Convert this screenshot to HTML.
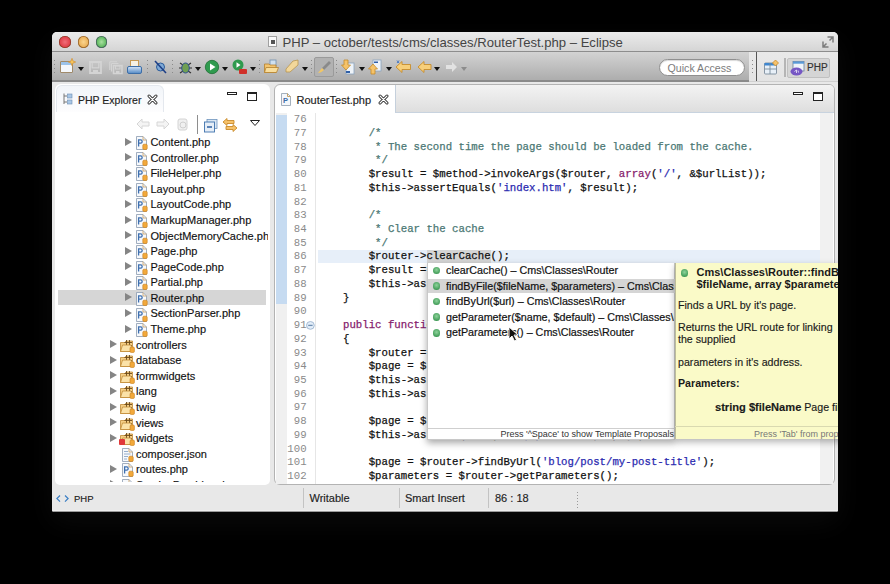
<!DOCTYPE html>
<html><head><meta charset="utf-8">
<style>
*{margin:0;padding:0;box-sizing:border-box}
html,body{width:890px;height:584px;overflow:hidden;background:#000}
body{position:relative;font-family:"Liberation Sans",sans-serif;}
.a{position:absolute}
svg{position:absolute;overflow:visible}
#shadow{position:absolute;left:52px;top:32px;width:786px;height:480px;border-radius:5px;box-shadow:0 10px 28px rgba(255,255,255,.045)}
#win{position:absolute;left:0;top:0;width:890px;height:584px;clip-path:inset(32px 52px 72px 52px round 5px 5px 2px 2px);background:#e8e8e8}
.t{position:absolute;white-space:pre;line-height:1}
.code{position:absolute;left:317.4px;top:112.3px;font-family:"Liberation Mono",monospace;font-size:10.7px;line-height:13.72px;white-space:pre;color:#111;-webkit-text-stroke:0.25px currentColor}
.ln{position:absolute;left:280px;width:27.5px;top:112.3px;font-family:"Liberation Mono",monospace;font-size:10.7px;line-height:13.72px;white-space:pre;color:#8a8a8a;text-align:right}
.k{color:#86206c}
.s{color:#2a2ab0}
.c{color:#4b7874}
.treeX{position:absolute;left:0;top:134.1px;font-size:11px;line-height:15.58px;color:#111;white-space:pre}
.tri{position:absolute;width:0;height:0;border-left:7.5px solid #858585;border-top:4.3px solid transparent;border-bottom:4.3px solid transparent}
.dd{position:absolute;width:0;height:0;border-top:4px solid #111;border-left:3px solid transparent;border-right:3px solid transparent}
.dots{position:absolute;width:1px;background:repeating-linear-gradient(#8a8a8a 0 1px,transparent 1px 4px)}
</style></head>
<body>
<div id="shadow"></div>
<div id="win">
  <!-- title bar -->
  <div class="a" style="left:52px;top:32px;width:786px;height:19px;background:linear-gradient(#ebebeb,#d5d5d5)"></div>
  <div class="a" style="left:52px;top:51px;width:786px;height:1px;background:#8d8d8d"></div>
  <div class="a" style="left:59.4px;top:36.4px;width:11.2px;height:11.2px;border-radius:50%;background:radial-gradient(ellipse at 50% 50%,#f0707a 0,#e0404a 60%,#9a3a2a 100%);box-shadow:inset 0 0 0 0.8px rgba(120,60,30,.75)"></div>
  <div class="a" style="left:77.8px;top:36.4px;width:11.2px;height:11.2px;border-radius:50%;background:radial-gradient(ellipse at 50% 50%,#fbd58e 0,#eab15a 60%,#a8702a 100%);box-shadow:inset 0 0 0 0.8px rgba(130,80,30,.75)"></div>
  <div class="a" style="left:96.1px;top:36.4px;width:11.2px;height:11.2px;border-radius:50%;background:radial-gradient(ellipse at 50% 50%,#a9e0a0 0,#5fb860 60%,#3a6a50 100%);box-shadow:inset 0 0 0 0.8px rgba(60,70,90,.7)"></div>
  <div class="a" style="left:268px;top:36px;width:9px;height:11px;background:#fafafa;border:1px solid #a0a0a0"><div class="a" style="left:1.5px;top:3px;width:4px;height:4px;background:#555"></div></div>
  <div class="t" style="left:282.5px;top:35.6px;font-size:13.1px;color:#444">PHP – october/tests/cms/classes/RouterTest.php – Eclipse</div>
  <svg style="left:822px;top:35.5px" width="12" height="12"><path d="M5.5 1 H11 V6.5 M11 1 L7.5 4.5" stroke="#7c7c7c" stroke-width="1.5" fill="none"/><path d="M1 5.5 V11 H6.5 M1 11 L4.5 7.5" stroke="#7c7c7c" stroke-width="1.5" fill="none"/></svg>

  <!-- toolbar -->
  <div class="a" style="left:52px;top:52px;width:697px;height:28px;background:linear-gradient(#d3d3d3,#adadad)"></div>
  <div class="a" style="left:52px;top:80px;width:697px;height:1.5px;background:#8a8a8a"></div>
  <div class="a" style="left:749px;top:52px;width:89px;height:30px;background:linear-gradient(#e9e9e9,#e3e3e3)"></div>
  <div class="a" style="left:749px;top:81px;width:89px;height:1px;background:#cfcfcf"></div>
  <div class="a" style="left:755.5px;top:52px;width:1.5px;height:29px;background:#555"></div>
  <div class="dots" style="left:54px;top:60px;height:14px"></div>
  <div class="dots" style="left:147px;top:60px;height:14px"></div>
  <div class="dots" style="left:172px;top:60px;height:14px"></div>
  <div class="dots" style="left:259px;top:60px;height:14px"></div>
  <div class="dots" style="left:311px;top:60px;height:14px"></div>
  <div class="dots" style="left:336px;top:60px;height:14px"></div>
  <div class="dots" style="left:751.5px;top:60px;height:16px"></div>
  <!-- new -->
  <div class="a" style="left:60px;top:61px;width:13px;height:12px;background:linear-gradient(#9cc3ea 0 3px,#f4f7fb 3px);border:1px solid #a08a6a;border-radius:1px"></div>
  <svg style="left:68px;top:57.5px" width="8" height="8"><path d="M4 0.3 L5 3 L7.7 4 L5 5 L4 7.7 L3 5 L0.3 4 L3 3 Z" fill="#f6c45a" stroke="#d08a2a" stroke-width="0.6"/></svg>
  <div class="dd" style="left:77.5px;top:66.5px"></div>
  <!-- save (disabled) -->
  <svg style="left:88.5px;top:60.5px" width="13" height="13"><path d="M1 1 H12 V12 H1 Z" fill="none" stroke="#d4d4d4" stroke-width="1.8"/><rect x="3.2" y="1.5" width="6.6" height="5.3" fill="none" stroke="#d4d4d4" stroke-width="1.2"/><rect x="4" y="9" width="5" height="3" fill="#d4d4d4"/></svg>
  <svg style="left:108.5px;top:60.5px" width="14" height="13"><path d="M0.8 0.8 H8 M0.8 0.8 V9 M2.5 2.5 H9.5 M2.5 2.5 V10.5" fill="none" stroke="#d4d4d4" stroke-width="1.1"/><path d="M4.5 4.5 H13 V12.5 H4.5 Z" fill="none" stroke="#d4d4d4" stroke-width="1.6"/><rect x="6.5" y="5" width="4.5" height="3" fill="none" stroke="#d4d4d4" stroke-width="1"/><rect x="7" y="10" width="3.5" height="2.3" fill="#d4d4d4"/></svg>
  <!-- print -->
  <div class="a" style="left:130px;top:60px;width:9px;height:8px;background:#f6f1e4;border:1px solid #c59a55"></div>
  <div class="a" style="left:127px;top:66px;width:15px;height:8px;background:linear-gradient(#cfe0f3,#5b8fc8);border:1px solid #3c6ea8;border-radius:2px"></div>
  <!-- skip breakpoints -->
  <svg style="left:154px;top:60px" width="13" height="14"><circle cx="6.5" cy="7" r="4" fill="#7faad6" stroke="#2b5b9a"/><path d="M1 1 L12 13" stroke="#1e3f86" stroke-width="1.6"/></svg>
  <!-- debug bug -->
  <svg style="left:178px;top:60px" width="15" height="15"><path d="M2 3 L5 5 M13 3 L10 5 M1 8 H4 M11 8 H14 M2 13 L5 11 M13 13 L10 11" stroke="#333" stroke-width="1.2"/><ellipse cx="7.5" cy="8" rx="3.8" ry="5" fill="#6f9f52" stroke="#2f4f8f"/></svg>
  <div class="dd" style="left:194.5px;top:66.5px"></div>
  <!-- run -->
  <svg style="left:205px;top:60px" width="14" height="14"><circle cx="7" cy="7" r="6.7" fill="#2f9a4e" stroke="#1f6f35" stroke-width="0.8"/><path d="M5 3.5 L10.5 7 L5 10.5 Z" fill="#fff"/></svg>
  <div class="dd" style="left:222px;top:66.5px"></div>
  <!-- ext tools -->
  <svg style="left:232px;top:59px" width="16" height="16"><circle cx="6" cy="6" r="5.5" fill="#2f9a4e"/><path d="M4.5 3.3 L8.5 6 L4.5 8.7 Z" fill="#fff"/><rect x="7" y="10" width="8" height="5" rx="1" fill="#d0302a"/></svg>
  <div class="dd" style="left:249.5px;top:66.5px"></div>
  <!-- open type -->
  <svg style="left:264px;top:59px" width="15" height="15"><rect x="6" y="1" width="6" height="6" fill="#cfe0f0" stroke="#6f8fb0" stroke-width="0.8"/><path d="M0.5 5 H5 L6 6 H12 V13.5 H0.5 Z" fill="#f3c46e" stroke="#b5812f" stroke-width="0.8"/><path d="M2 8.5 H14.5 L12.5 13.5 H0.5 Z" fill="#f8dd9c" stroke="#b5812f" stroke-width="0.8"/></svg>
  <!-- brush -->
  <svg style="left:284px;top:59px" width="16" height="16"><path d="M9 2 L14 1 L14 6 L6 13 L2 13 L2 10 Z" fill="#f2d79a" stroke="#b9954f" stroke-width="0.8"/></svg>
  <div class="dd" style="left:302px;top:66.5px"></div>
  <!-- pressed button -->
  <div class="a" style="left:314px;top:57px;width:20px;height:20px;background:#b2b2b2;border:1px solid #9a9a9a;border-radius:2px"></div>
  <svg style="left:316px;top:59px" width="16" height="16"><path d="M13 2 L6 9 L8 11 L15 4 Z" fill="#8a8a8a"/><path d="M2 14 L6 9 L8 11 C6 13 4 14 2 14 Z" fill="#f2c766"/></svg>
  <!-- next annotation -->
  <svg style="left:341px;top:59px" width="14" height="16"><rect x="5" y="4" width="8" height="11" fill="#eef3f8" stroke="#8aa4bf" stroke-width="0.8"/><path d="M3 1 H7 V6 H9.5 L5 11 L0.5 6 H3 Z" fill="#f5c36a" stroke="#c58a2a" stroke-width="0.8"/><rect x="5" y="12" width="4" height="2" fill="#2f5fa8"/></svg>
  <div class="dd" style="left:358.5px;top:66.5px"></div>
  <svg style="left:368px;top:59px" width="14" height="16"><rect x="5" y="1" width="8" height="11" fill="#eef3f8" stroke="#8aa4bf" stroke-width="0.8"/><path d="M3 15 H7 V10 H9.5 L5 5 L0.5 10 H3 Z" fill="#f5c36a" stroke="#c58a2a" stroke-width="0.8"/><rect x="6" y="2.5" width="4" height="1.5" fill="#2f5fa8"/></svg>
  <div class="dd" style="left:385.5px;top:66.5px"></div>
  <!-- last edit -->
  <svg style="left:395px;top:60px" width="17" height="14"><path d="M1 7 L7 1.5 V4.5 H15.5 V9.5 H7 V12.5 Z" fill="#f7cf7a" stroke="#c78d2c" stroke-width="0.9"/><path d="M2 0.5 L4 3 M4 0.5 L2 3" stroke="#3a6fc0" stroke-width="0.9"/></svg>
  <svg style="left:417px;top:60px" width="15" height="14"><path d="M1 7 L7 1.5 V4.5 H14 V9.5 H7 V12.5 Z" fill="#f7cf7a" stroke="#c78d2c" stroke-width="0.9"/></svg>
  <div class="dd" style="left:433.5px;top:66.5px"></div>
  <svg style="left:445px;top:61px" width="13" height="12"><path d="M12 6 L7 1 V4 H1 V8 H7 V11 Z" fill="#e2e2e2"/></svg>
  <div class="dd" style="left:461px;top:66.5px;border-top-color:#8c8c8c"></div>

  <!-- quick access -->
  <div class="a" style="left:659px;top:58.5px;width:86px;height:17px;border-radius:9px;background:#fff;border:1px solid #8f8f8f;box-shadow:inset 0 1px 1px rgba(0,0,0,.15)"></div>
  <div class="t" style="left:667.5px;top:62.5px;font-size:10.65px;color:#7c7c7c">Quick Access</div>
  <!-- perspective bar -->
  <svg style="left:764px;top:60px" width="16" height="16"><rect x="0.5" y="3" width="12" height="11" rx="1" fill="#e8f0f8" stroke="#7c8c9c" stroke-width="0.9"/><rect x="0.5" y="3" width="12" height="2.5" fill="#3d86d0"/><path d="M6 3 V14 M0.5 9 H12.5" stroke="#7c8c9c" stroke-width="0.9"/><path d="M11.5 0 L14.5 3 L11.5 6 L8.5 3 Z" fill="#f6c26a" stroke="#c98a2a" stroke-width="0.8"/></svg>
  <div class="a" style="left:784px;top:58px;width:1.5px;height:19px;background:#b5b5b5"></div>
  <div class="a" style="left:787px;top:57.5px;width:43px;height:20px;background:#d5d5d5;border:1px solid #c0c0c0;border-radius:2px"></div>
  <svg style="left:789.5px;top:61px" width="16" height="16"><rect x="3" y="0.5" width="11" height="9.5" fill="#eef4fa" stroke="#6a7f99" stroke-width="0.8"/><rect x="3" y="0.5" width="11" height="2.2" fill="#5a9ad8"/><ellipse cx="6.5" cy="10.5" rx="6" ry="4" fill="#7657c4"/><path d="M4.5 10.5 L6.5 9 M6.5 9 V12 M8 9.5 L8.5 11.5" stroke="#e6e0f6" stroke-width="0.9"/></svg>
  <div class="t" style="left:807px;top:62.8px;font-size:10px;color:#333;-webkit-text-stroke:0.2px #333">PHP</div>

  <!-- ===== LEFT PANEL ===== -->
  <div class="a" style="left:54.5px;top:84px;width:215.5px;height:400.5px;background:#fff;border-radius:6px 6px 5px 5px"></div>
  <div class="a" style="left:55.5px;top:84.5px;width:108px;height:27px;border-radius:6px 6px 0 0;background:linear-gradient(#f2f5f9,#fdfdfe);border:1px solid #e4e8ee;border-bottom:none"></div>
  <svg style="left:63px;top:93px" width="10" height="12"><path d="M1 0.5 V11 M1 3 H4 M1 9 H4" stroke="#777" stroke-width="1"/><rect x="4.5" y="1" width="4.5" height="4" fill="#a9c7e6" stroke="#6b8db3" stroke-width="0.6"/><rect x="4.5" y="7" width="4.5" height="4" fill="#a9c7e6" stroke="#6b8db3" stroke-width="0.6"/></svg>
  <div class="t" style="left:78px;top:94.5px;font-size:10.5px;color:#222;-webkit-text-stroke:0.15px #222">PHP Explorer</div>
  <svg style="left:148px;top:95px" width="9" height="9"><path d="M1 1 L8 8 M8 1 L1 8" stroke="#1e1e1e" stroke-width="3" stroke-linecap="round"/><path d="M1 1 L8 8 M8 1 L1 8" stroke="#fff" stroke-width="1.2" stroke-linecap="round"/></svg>
  <div class="a" style="left:227px;top:91.5px;width:10px;height:3.5px;border:1px solid #222;background:#fff"></div>
  <div class="a" style="left:247px;top:91.5px;width:10px;height:9px;border:1px solid #222;border-top-width:2.5px;background:#fff"></div>
  <!-- explorer toolbar -->
  <svg style="left:136px;top:118px" width="14" height="12"><path d="M1 6 L6 1 V4 H13 V8 H6 V11 Z" fill="#f4f4f4" stroke="#d6d6d6"/></svg>
  <svg style="left:156px;top:118px" width="14" height="12"><path d="M13 6 L8 1 V4 H1 V8 H8 V11 Z" fill="#f4f4f4" stroke="#d6d6d6"/></svg>
  <svg style="left:177px;top:118px" width="12" height="13"><rect x="1" y="1" width="9" height="11" rx="2" fill="#f0f0f0" stroke="#d4d4d4"/><circle cx="6" cy="7" r="3" fill="none" stroke="#cfcfcf"/></svg>
  <div class="a" style="left:196.5px;top:115px;width:1px;height:19px;background:#8e8e8e"></div>
  <svg style="left:203.5px;top:118.5px" width="14" height="14"><rect x="3" y="0.5" width="10" height="9" fill="#dbe7f3" stroke="#6e94bd" stroke-width="0.8"/><rect x="0.5" y="3" width="10" height="10" fill="#e6eef7" stroke="#3f72ad" stroke-width="0.9"/><path d="M3 8 H8" stroke="#2b5ea0" stroke-width="1.5"/></svg>
  <svg style="left:222px;top:117px" width="16" height="16"><path d="M1 5 L5 1.5 V3.5 H12 V6.5 H5 V8.5 Z" fill="#f6c26a" stroke="#c98a2a" stroke-width="0.9"/><path d="M15 11 L11 7.5 V9.5 H4 V12.5 H11 V14.5 Z" fill="#f6c26a" stroke="#c98a2a" stroke-width="0.9"/></svg>
  <svg style="left:250px;top:120px" width="10" height="6"><path d="M0.5 0.5 H9.5 L5 5.5 Z" fill="#fff" stroke="#222" stroke-width="1"/></svg>

  <!-- selected row -->
  <div class="a" style="left:57.8px;top:290.4px;width:208.7px;height:14.9px;background:#d6d6d6"></div>
  <div id="treewrap" class="a" style="left:54.5px;top:113px;width:213px;height:369px;overflow:hidden">
<div class="tri" style="left:70.2px;top:24.6px"></div>
<svg style="left:81.8px;top:23.1px" width="12" height="14"><path d="M0.5 0.5 H7 L10.5 4 V13.5 H0.5 Z" fill="#f7f9fc" stroke="#8c9bb0" stroke-width="0.8"/><path d="M7 0.5 V4 H10.5" fill="none" stroke="#c9a060" stroke-width="0.8"/><path d="M2.6 10.5 V3.8 H4.8 C6.6 3.8 6.6 7.2 4.8 7.2 H2.6" fill="none" stroke="#3f70b0" stroke-width="1.3"/><rect x="6.8" y="8.2" width="4.4" height="5.3" rx="1.2" fill="#f2a93b" stroke="#c7801f" stroke-width="0.6"/></svg>
<div class="t" style="left:95.9px;top:22.10px;font-size:11px;line-height:15.58px;color:#111;-webkit-text-stroke:0.15px #111">Content.php</div>
<div class="tri" style="left:70.2px;top:40.2px"></div>
<svg style="left:81.8px;top:38.7px" width="12" height="14"><path d="M0.5 0.5 H7 L10.5 4 V13.5 H0.5 Z" fill="#f7f9fc" stroke="#8c9bb0" stroke-width="0.8"/><path d="M7 0.5 V4 H10.5" fill="none" stroke="#c9a060" stroke-width="0.8"/><path d="M2.6 10.5 V3.8 H4.8 C6.6 3.8 6.6 7.2 4.8 7.2 H2.6" fill="none" stroke="#3f70b0" stroke-width="1.3"/><rect x="6.8" y="8.2" width="4.4" height="5.3" rx="1.2" fill="#f2a93b" stroke="#c7801f" stroke-width="0.6"/></svg>
<div class="t" style="left:95.9px;top:37.68px;font-size:11px;line-height:15.58px;color:#111;-webkit-text-stroke:0.15px #111">Controller.php</div>
<div class="tri" style="left:70.2px;top:55.8px"></div>
<svg style="left:81.8px;top:54.3px" width="12" height="14"><path d="M0.5 0.5 H7 L10.5 4 V13.5 H0.5 Z" fill="#f7f9fc" stroke="#8c9bb0" stroke-width="0.8"/><path d="M7 0.5 V4 H10.5" fill="none" stroke="#c9a060" stroke-width="0.8"/><path d="M2.6 10.5 V3.8 H4.8 C6.6 3.8 6.6 7.2 4.8 7.2 H2.6" fill="none" stroke="#3f70b0" stroke-width="1.3"/><rect x="6.8" y="8.2" width="4.4" height="5.3" rx="1.2" fill="#f2a93b" stroke="#c7801f" stroke-width="0.6"/></svg>
<div class="t" style="left:95.9px;top:53.26px;font-size:11px;line-height:15.58px;color:#111;-webkit-text-stroke:0.15px #111">FileHelper.php</div>
<div class="tri" style="left:70.2px;top:71.3px"></div>
<svg style="left:81.8px;top:69.8px" width="12" height="14"><path d="M0.5 0.5 H7 L10.5 4 V13.5 H0.5 Z" fill="#f7f9fc" stroke="#8c9bb0" stroke-width="0.8"/><path d="M7 0.5 V4 H10.5" fill="none" stroke="#c9a060" stroke-width="0.8"/><path d="M2.6 10.5 V3.8 H4.8 C6.6 3.8 6.6 7.2 4.8 7.2 H2.6" fill="none" stroke="#3f70b0" stroke-width="1.3"/><rect x="6.8" y="8.2" width="4.4" height="5.3" rx="1.2" fill="#f2a93b" stroke="#c7801f" stroke-width="0.6"/></svg>
<div class="t" style="left:95.9px;top:68.84px;font-size:11px;line-height:15.58px;color:#111;-webkit-text-stroke:0.15px #111">Layout.php</div>
<div class="tri" style="left:70.2px;top:86.9px"></div>
<svg style="left:81.8px;top:85.4px" width="12" height="14"><path d="M0.5 0.5 H7 L10.5 4 V13.5 H0.5 Z" fill="#f7f9fc" stroke="#8c9bb0" stroke-width="0.8"/><path d="M7 0.5 V4 H10.5" fill="none" stroke="#c9a060" stroke-width="0.8"/><path d="M2.6 10.5 V3.8 H4.8 C6.6 3.8 6.6 7.2 4.8 7.2 H2.6" fill="none" stroke="#3f70b0" stroke-width="1.3"/><rect x="6.8" y="8.2" width="4.4" height="5.3" rx="1.2" fill="#f2a93b" stroke="#c7801f" stroke-width="0.6"/></svg>
<div class="t" style="left:95.9px;top:84.42px;font-size:11px;line-height:15.58px;color:#111;-webkit-text-stroke:0.15px #111">LayoutCode.php</div>
<div class="tri" style="left:70.2px;top:102.5px"></div>
<svg style="left:81.8px;top:101.0px" width="12" height="14"><path d="M0.5 0.5 H7 L10.5 4 V13.5 H0.5 Z" fill="#f7f9fc" stroke="#8c9bb0" stroke-width="0.8"/><path d="M7 0.5 V4 H10.5" fill="none" stroke="#c9a060" stroke-width="0.8"/><path d="M2.6 10.5 V3.8 H4.8 C6.6 3.8 6.6 7.2 4.8 7.2 H2.6" fill="none" stroke="#3f70b0" stroke-width="1.3"/><rect x="6.8" y="8.2" width="4.4" height="5.3" rx="1.2" fill="#f2a93b" stroke="#c7801f" stroke-width="0.6"/></svg>
<div class="t" style="left:95.9px;top:100.00px;font-size:11px;line-height:15.58px;color:#111;-webkit-text-stroke:0.15px #111">MarkupManager.php</div>
<div class="tri" style="left:70.2px;top:118.1px"></div>
<svg style="left:81.8px;top:116.6px" width="12" height="14"><path d="M0.5 0.5 H7 L10.5 4 V13.5 H0.5 Z" fill="#f7f9fc" stroke="#8c9bb0" stroke-width="0.8"/><path d="M7 0.5 V4 H10.5" fill="none" stroke="#c9a060" stroke-width="0.8"/><path d="M2.6 10.5 V3.8 H4.8 C6.6 3.8 6.6 7.2 4.8 7.2 H2.6" fill="none" stroke="#3f70b0" stroke-width="1.3"/><rect x="6.8" y="8.2" width="4.4" height="5.3" rx="1.2" fill="#f2a93b" stroke="#c7801f" stroke-width="0.6"/></svg>
<div class="t" style="left:95.9px;top:115.58px;font-size:11px;line-height:15.58px;color:#111;-webkit-text-stroke:0.15px #111">ObjectMemoryCache.php</div>
<div class="tri" style="left:70.2px;top:133.7px"></div>
<svg style="left:81.8px;top:132.2px" width="12" height="14"><path d="M0.5 0.5 H7 L10.5 4 V13.5 H0.5 Z" fill="#f7f9fc" stroke="#8c9bb0" stroke-width="0.8"/><path d="M7 0.5 V4 H10.5" fill="none" stroke="#c9a060" stroke-width="0.8"/><path d="M2.6 10.5 V3.8 H4.8 C6.6 3.8 6.6 7.2 4.8 7.2 H2.6" fill="none" stroke="#3f70b0" stroke-width="1.3"/><rect x="6.8" y="8.2" width="4.4" height="5.3" rx="1.2" fill="#f2a93b" stroke="#c7801f" stroke-width="0.6"/></svg>
<div class="t" style="left:95.9px;top:131.16px;font-size:11px;line-height:15.58px;color:#111;-webkit-text-stroke:0.15px #111">Page.php</div>
<div class="tri" style="left:70.2px;top:149.2px"></div>
<svg style="left:81.8px;top:147.7px" width="12" height="14"><path d="M0.5 0.5 H7 L10.5 4 V13.5 H0.5 Z" fill="#f7f9fc" stroke="#8c9bb0" stroke-width="0.8"/><path d="M7 0.5 V4 H10.5" fill="none" stroke="#c9a060" stroke-width="0.8"/><path d="M2.6 10.5 V3.8 H4.8 C6.6 3.8 6.6 7.2 4.8 7.2 H2.6" fill="none" stroke="#3f70b0" stroke-width="1.3"/><rect x="6.8" y="8.2" width="4.4" height="5.3" rx="1.2" fill="#f2a93b" stroke="#c7801f" stroke-width="0.6"/></svg>
<div class="t" style="left:95.9px;top:146.74px;font-size:11px;line-height:15.58px;color:#111;-webkit-text-stroke:0.15px #111">PageCode.php</div>
<div class="tri" style="left:70.2px;top:164.8px"></div>
<svg style="left:81.8px;top:163.3px" width="12" height="14"><path d="M0.5 0.5 H7 L10.5 4 V13.5 H0.5 Z" fill="#f7f9fc" stroke="#8c9bb0" stroke-width="0.8"/><path d="M7 0.5 V4 H10.5" fill="none" stroke="#c9a060" stroke-width="0.8"/><path d="M2.6 10.5 V3.8 H4.8 C6.6 3.8 6.6 7.2 4.8 7.2 H2.6" fill="none" stroke="#3f70b0" stroke-width="1.3"/><rect x="6.8" y="8.2" width="4.4" height="5.3" rx="1.2" fill="#f2a93b" stroke="#c7801f" stroke-width="0.6"/></svg>
<div class="t" style="left:95.9px;top:162.32px;font-size:11px;line-height:15.58px;color:#111;-webkit-text-stroke:0.15px #111">Partial.php</div>
<div class="tri" style="left:70.2px;top:180.4px"></div>
<svg style="left:81.8px;top:178.9px" width="12" height="14"><path d="M0.5 0.5 H7 L10.5 4 V13.5 H0.5 Z" fill="#f7f9fc" stroke="#8c9bb0" stroke-width="0.8"/><path d="M7 0.5 V4 H10.5" fill="none" stroke="#c9a060" stroke-width="0.8"/><path d="M2.6 10.5 V3.8 H4.8 C6.6 3.8 6.6 7.2 4.8 7.2 H2.6" fill="none" stroke="#3f70b0" stroke-width="1.3"/><rect x="6.8" y="8.2" width="4.4" height="5.3" rx="1.2" fill="#f2a93b" stroke="#c7801f" stroke-width="0.6"/></svg>
<div class="t" style="left:95.9px;top:177.90px;font-size:11px;line-height:15.58px;color:#111;-webkit-text-stroke:0.15px #111">Router.php</div>
<div class="tri" style="left:70.2px;top:196.0px"></div>
<svg style="left:81.8px;top:194.5px" width="12" height="14"><path d="M0.5 0.5 H7 L10.5 4 V13.5 H0.5 Z" fill="#f7f9fc" stroke="#8c9bb0" stroke-width="0.8"/><path d="M7 0.5 V4 H10.5" fill="none" stroke="#c9a060" stroke-width="0.8"/><path d="M2.6 10.5 V3.8 H4.8 C6.6 3.8 6.6 7.2 4.8 7.2 H2.6" fill="none" stroke="#3f70b0" stroke-width="1.3"/><rect x="6.8" y="8.2" width="4.4" height="5.3" rx="1.2" fill="#f2a93b" stroke="#c7801f" stroke-width="0.6"/></svg>
<div class="t" style="left:95.9px;top:193.48px;font-size:11px;line-height:15.58px;color:#111;-webkit-text-stroke:0.15px #111">SectionParser.php</div>
<div class="tri" style="left:70.2px;top:211.6px"></div>
<svg style="left:81.8px;top:210.1px" width="12" height="14"><path d="M0.5 0.5 H7 L10.5 4 V13.5 H0.5 Z" fill="#f7f9fc" stroke="#8c9bb0" stroke-width="0.8"/><path d="M7 0.5 V4 H10.5" fill="none" stroke="#c9a060" stroke-width="0.8"/><path d="M2.6 10.5 V3.8 H4.8 C6.6 3.8 6.6 7.2 4.8 7.2 H2.6" fill="none" stroke="#3f70b0" stroke-width="1.3"/><rect x="6.8" y="8.2" width="4.4" height="5.3" rx="1.2" fill="#f2a93b" stroke="#c7801f" stroke-width="0.6"/></svg>
<div class="t" style="left:95.9px;top:209.06px;font-size:11px;line-height:15.58px;color:#111;-webkit-text-stroke:0.15px #111">Theme.php</div>
<div class="tri" style="left:55.5px;top:227.1px"></div>
<svg style="left:65.5px;top:225.6px" width="15" height="14"><path d="M0.5 3.5 H5 L6 2 H12.5 V12.5 H0.5 Z" fill="#f5cf86" stroke="#c08a36" stroke-width="0.8"/><path d="M6.5 1 V10 M9.5 1 V10 M4.5 3.5 H12 M4.5 6.5 H12" stroke="#6b4a1a" stroke-width="0.9"/><path d="M0.5 12.5 L2.5 6 H11 L12.5 12.5 Z" fill="#fbe2a8" stroke="#c08a36" stroke-width="0.8"/><rect x="10" y="8" width="4.4" height="5.5" rx="1.2" fill="#f2a93b" stroke="#c7801f" stroke-width="0.6"/></svg>
<div class="t" style="left:81.5px;top:224.64px;font-size:11px;line-height:15.58px;color:#111;-webkit-text-stroke:0.15px #111">controllers</div>
<div class="tri" style="left:55.5px;top:242.7px"></div>
<svg style="left:65.5px;top:241.2px" width="15" height="14"><path d="M0.5 3.5 H5 L6 2 H12.5 V12.5 H0.5 Z" fill="#f5cf86" stroke="#c08a36" stroke-width="0.8"/><path d="M6.5 1 V10 M9.5 1 V10 M4.5 3.5 H12 M4.5 6.5 H12" stroke="#6b4a1a" stroke-width="0.9"/><path d="M0.5 12.5 L2.5 6 H11 L12.5 12.5 Z" fill="#fbe2a8" stroke="#c08a36" stroke-width="0.8"/><rect x="10" y="8" width="4.4" height="5.5" rx="1.2" fill="#f2a93b" stroke="#c7801f" stroke-width="0.6"/></svg>
<div class="t" style="left:81.5px;top:240.22px;font-size:11px;line-height:15.58px;color:#111;-webkit-text-stroke:0.15px #111">database</div>
<div class="tri" style="left:55.5px;top:258.3px"></div>
<svg style="left:65.5px;top:256.8px" width="15" height="14"><path d="M0.5 3.5 H5 L6 2 H12.5 V12.5 H0.5 Z" fill="#f5cf86" stroke="#c08a36" stroke-width="0.8"/><path d="M6.5 1 V10 M9.5 1 V10 M4.5 3.5 H12 M4.5 6.5 H12" stroke="#6b4a1a" stroke-width="0.9"/><path d="M0.5 12.5 L2.5 6 H11 L12.5 12.5 Z" fill="#fbe2a8" stroke="#c08a36" stroke-width="0.8"/><rect x="10" y="8" width="4.4" height="5.5" rx="1.2" fill="#f2a93b" stroke="#c7801f" stroke-width="0.6"/></svg>
<div class="t" style="left:81.5px;top:255.80px;font-size:11px;line-height:15.58px;color:#111;-webkit-text-stroke:0.15px #111">formwidgets</div>
<div class="tri" style="left:55.5px;top:273.9px"></div>
<svg style="left:65.5px;top:272.4px" width="15" height="14"><path d="M0.5 3.5 H5 L6 2 H12.5 V12.5 H0.5 Z" fill="#f5cf86" stroke="#c08a36" stroke-width="0.8"/><path d="M6.5 1 V10 M9.5 1 V10 M4.5 3.5 H12 M4.5 6.5 H12" stroke="#6b4a1a" stroke-width="0.9"/><path d="M0.5 12.5 L2.5 6 H11 L12.5 12.5 Z" fill="#fbe2a8" stroke="#c08a36" stroke-width="0.8"/><rect x="10" y="8" width="4.4" height="5.5" rx="1.2" fill="#f2a93b" stroke="#c7801f" stroke-width="0.6"/></svg>
<div class="t" style="left:81.5px;top:271.38px;font-size:11px;line-height:15.58px;color:#111;-webkit-text-stroke:0.15px #111">lang</div>
<div class="tri" style="left:55.5px;top:289.5px"></div>
<svg style="left:65.5px;top:288.0px" width="15" height="14"><path d="M0.5 3.5 H5 L6 2 H12.5 V12.5 H0.5 Z" fill="#f5cf86" stroke="#c08a36" stroke-width="0.8"/><path d="M6.5 1 V10 M9.5 1 V10 M4.5 3.5 H12 M4.5 6.5 H12" stroke="#6b4a1a" stroke-width="0.9"/><path d="M0.5 12.5 L2.5 6 H11 L12.5 12.5 Z" fill="#fbe2a8" stroke="#c08a36" stroke-width="0.8"/><rect x="10" y="8" width="4.4" height="5.5" rx="1.2" fill="#f2a93b" stroke="#c7801f" stroke-width="0.6"/></svg>
<div class="t" style="left:81.5px;top:286.96px;font-size:11px;line-height:15.58px;color:#111;-webkit-text-stroke:0.15px #111">twig</div>
<div class="tri" style="left:55.5px;top:305.0px"></div>
<svg style="left:65.5px;top:303.5px" width="15" height="14"><path d="M0.5 3.5 H5 L6 2 H12.5 V12.5 H0.5 Z" fill="#f5cf86" stroke="#c08a36" stroke-width="0.8"/><path d="M6.5 1 V10 M9.5 1 V10 M4.5 3.5 H12 M4.5 6.5 H12" stroke="#6b4a1a" stroke-width="0.9"/><path d="M0.5 12.5 L2.5 6 H11 L12.5 12.5 Z" fill="#fbe2a8" stroke="#c08a36" stroke-width="0.8"/><rect x="10" y="8" width="4.4" height="5.5" rx="1.2" fill="#f2a93b" stroke="#c7801f" stroke-width="0.6"/></svg>
<div class="t" style="left:81.5px;top:302.54px;font-size:11px;line-height:15.58px;color:#111;-webkit-text-stroke:0.15px #111">views</div>
<div class="tri" style="left:55.5px;top:320.6px"></div>
<svg style="left:65.5px;top:319.1px" width="15" height="14"><path d="M0.5 3.5 H5 L6 2 H12.5 V12.5 H0.5 Z" fill="#f5cf86" stroke="#c08a36" stroke-width="0.8"/><path d="M6.5 1 V10 M9.5 1 V10 M4.5 3.5 H12 M4.5 6.5 H12" stroke="#6b4a1a" stroke-width="0.9"/><path d="M0.5 12.5 L2.5 6 H11 L12.5 12.5 Z" fill="#fbe2a8" stroke="#c08a36" stroke-width="0.8"/><rect x="10" y="8" width="4.4" height="5.5" rx="1.2" fill="#f2a93b" stroke="#c7801f" stroke-width="0.6"/></svg>
<div class="a" style="left:64.5px;top:326.1px;width:6px;height:6px;background:#e0393a;border-radius:1px"></div>
<div class="t" style="left:81.5px;top:318.12px;font-size:11px;line-height:15.58px;color:#111;-webkit-text-stroke:0.15px #111">widgets</div>
<svg style="left:67.0px;top:334.7px" width="12" height="14"><path d="M0.5 0.5 H7 L10.5 4 V13.5 H0.5 Z" fill="#f7f9fc" stroke="#8c9bb0" stroke-width="0.8"/><path d="M7 0.5 V4 H10.5" fill="none" stroke="#c9a060" stroke-width="0.8"/><path d="M2 3.5 H6 M2 6 H8.5 M2 8.5 H6 M2 11 H5" stroke="#7d9cc0" stroke-width="0.8"/><rect x="6.8" y="8.2" width="4.4" height="5.3" rx="1.2" fill="#f2a93b" stroke="#c7801f" stroke-width="0.6"/></svg>
<div class="t" style="left:81.5px;top:333.70px;font-size:11px;line-height:15.58px;color:#111;-webkit-text-stroke:0.15px #111">composer.json</div>
<div class="tri" style="left:55.5px;top:351.8px"></div>
<svg style="left:67.0px;top:350.3px" width="12" height="14"><path d="M0.5 0.5 H7 L10.5 4 V13.5 H0.5 Z" fill="#f7f9fc" stroke="#8c9bb0" stroke-width="0.8"/><path d="M7 0.5 V4 H10.5" fill="none" stroke="#c9a060" stroke-width="0.8"/><path d="M2.6 10.5 V3.8 H4.8 C6.6 3.8 6.6 7.2 4.8 7.2 H2.6" fill="none" stroke="#3f70b0" stroke-width="1.3"/><rect x="6.8" y="8.2" width="4.4" height="5.3" rx="1.2" fill="#f2a93b" stroke="#c7801f" stroke-width="0.6"/></svg>
<div class="t" style="left:81.5px;top:349.28px;font-size:11px;line-height:15.58px;color:#111;-webkit-text-stroke:0.15px #111">routes.php</div>
<div class="tri" style="left:55.5px;top:367.4px"></div>
<svg style="left:67.0px;top:365.9px" width="12" height="14"><path d="M0.5 0.5 H7 L10.5 4 V13.5 H0.5 Z" fill="#f7f9fc" stroke="#8c9bb0" stroke-width="0.8"/><path d="M7 0.5 V4 H10.5" fill="none" stroke="#c9a060" stroke-width="0.8"/><path d="M2.6 10.5 V3.8 H4.8 C6.6 3.8 6.6 7.2 4.8 7.2 H2.6" fill="none" stroke="#3f70b0" stroke-width="1.3"/><rect x="6.8" y="8.2" width="4.4" height="5.3" rx="1.2" fill="#f2a93b" stroke="#c7801f" stroke-width="0.6"/></svg>
<div class="t" style="left:81.5px;top:364.86px;font-size:11px;line-height:15.58px;color:#111;-webkit-text-stroke:0.15px #111">ServiceProvider.php</div>
</div><!--/tree-->

  <!-- ===== EDITOR PANEL ===== -->
  <div class="a" style="left:273.5px;top:84px;width:561px;height:401px;background:#fff;border:1px solid #b3b3b3;border-radius:6px 6px 6px 6px;overflow:hidden">
    <div class="a" style="left:120.5px;top:0;width:440px;height:28px;background:linear-gradient(#f3f3f3,#dedede);border-left:1px solid #c5d0dc;border-bottom:1px solid #c8d3df"></div>
  </div>
  <svg style="left:281px;top:92.5px" width="10" height="13"><path d="M0.5 0.5 H6.5 L9.5 3.5 V12.5 H0.5 Z" fill="#f4f7fb" stroke="#9aa7b6" stroke-width="0.9"/><path d="M6.5 0.5 V3.5 H9.5" fill="none" stroke="#c59a55" stroke-width="0.9"/><text x="2" y="10" font-family="Liberation Sans" font-size="7.5" font-weight="bold" fill="#3d6ea8">P</text></svg>
  <div class="t" style="left:296.5px;top:94.5px;font-size:11px;color:#222;-webkit-text-stroke:0.15px #222">RouterTest.php</div>
  <svg style="left:379px;top:94.5px" width="9" height="9"><path d="M1 1 L8 8 M8 1 L1 8" stroke="#1e1e1e" stroke-width="3" stroke-linecap="round"/><path d="M1 1 L8 8 M8 1 L1 8" stroke="#fff" stroke-width="1.2" stroke-linecap="round"/></svg>
  <div class="a" style="left:793px;top:91.5px;width:9.5px;height:3.8px;border:1px solid #222;background:#fff"></div>
  <div class="a" style="left:813px;top:91.5px;width:9.5px;height:9.2px;border:1px solid #222;border-top-width:2.5px;background:#fff"></div>

  <!-- ruler -->
  <div class="a" style="left:275.5px;top:113px;width:11.5px;height:371px;background:#f0f0f0"></div>
  <div class="a" style="left:275.5px;top:114.5px;width:11.5px;height:189.5px;background:#c6dbf1"></div>
  <div class="a" style="left:314.8px;top:113px;width:1px;height:371px;background:#e6e6e6"></div>
  <div class="a" style="left:820px;top:113px;width:13px;height:371px;background:#f1f1f1"></div>
<svg style="left:306px;top:320.5px" width="9" height="9"><circle cx="4.4" cy="4.4" r="3.9" fill="#e3eef9" stroke="#9fb6cf" stroke-width="0.9"/><path d="M2.2 4.4 H6.6" stroke="#6f8fb2" stroke-width="1.3"/></svg>
  <!-- current line -->
  <div class="a" style="left:317.8px;top:249.6px;width:502px;height:13.2px;background:#e7eff9"></div>
  <div class="a" style="left:426.5px;top:249.6px;width:64.3px;height:13.2px;background:#d5d5d5"></div>

  <div id="codewrap" class="a" style="left:274.5px;top:113px;width:545.5px;height:371px;overflow:hidden">
<div class="ln" style="left:4.6px;top:0.3px">76
77
78
79
80
81
82
83
84
85
86
87
88
89
90
91
92
93
94
95
96
97
98
99
100
101
102</div>
<div class="code" style="left:42.9px;top:0.3px">
<span class="c">        /*</span>
<span class="c">         * The second time the page should be loaded from the cache.</span>
<span class="c">         */</span>
        $result = $method-&gt;invokeArgs($router, <span class="k">array</span>(<span class="s">'/'</span>, &amp;$urlList));
        $this-&gt;assertEquals(<span class="s">'index.htm'</span>, $result);

<span class="c">        /*</span>
<span class="c">         * Clear the cache</span>
<span class="c">         */</span>
        $router-&gt;clearCache();
        $result = $method-&gt;invokeArgs($router, <span class="k">array</span>(<span class="s">'/'</span>, &amp;$urlList));
        $this-&gt;assertEquals(<span class="s">'index.htm'</span>, $result);
    }

    <span class="k">public</span> <span class="k">function</span> testFindByUrl()
    {
        $router = <span class="k">new</span> Router(Theme::load(<span class="s">'test'</span>));
        $page = $router-&gt;findByUrl(<span class="s">'/'</span>);
        $this-&gt;assertEquals(<span class="s">'index.htm'</span>, $page-&gt;getFileName());
        $this-&gt;assertEquals(<span class="k">null</span>, $router-&gt;getParameters());

        $page = $router-&gt;findByUrl(<span class="s">'blog/post'</span>);
        $this-&gt;assertEquals(<span class="s">'blog-post.htm'</span>, $page);

        $page = $router-&gt;findByUrl(<span class="s">'blog/post/my-post-title'</span>);
        $parameters = $router-&gt;getParameters();</div>
</div><!--/code-->

  <!-- ===== STATUS BAR ===== -->
  <svg style="left:55.5px;top:494.8px" width="13" height="8"><path d="M4 0.5 L0.9 3.5 L4 6.6 M9 0.5 L12.1 3.5 L9 6.6" stroke="#3b7fc4" stroke-width="1.2" fill="none"/></svg>
  <div class="t" style="left:74px;top:493.6px;font-size:9.5px;color:#222;-webkit-text-stroke:0.15px #222">PHP</div>
  <div class="a" style="left:303px;top:488px;width:1px;height:20px;background:#c3c3c3"></div>
  <div class="a" style="left:398.5px;top:488px;width:1px;height:20px;background:#c3c3c3"></div>
  <div class="a" style="left:488px;top:488px;width:1px;height:20px;background:#c3c3c3"></div>
  <div class="dots" style="left:577px;top:492px;height:16px;background:repeating-linear-gradient(#9a9a9a 0 1px,transparent 1px 3px)"></div>
  <div class="t" style="left:309.5px;top:493px;font-size:11px;color:#222;-webkit-text-stroke:0.15px #222">Writable</div>
  <div class="t" style="left:405px;top:493px;font-size:11px;color:#222;-webkit-text-stroke:0.15px #222">Smart Insert</div>
  <div class="t" style="left:495px;top:493px;font-size:11px;color:#222;-webkit-text-stroke:0.15px #222">86 : 18</div>

  <div class="a" style="left:52px;top:510px;width:786px;height:1px;background:#f0f0f0"></div>
  <div class="a" style="left:52px;top:511px;width:786px;height:1px;background:#9c9c9c"></div>
  <div id="popups">
  <!-- autocomplete popup -->
  <div class="a" style="left:426.8px;top:263px;width:248px;height:176.8px;background:#fff;box-shadow:0 3px 7px rgba(0,0,0,.35);border:1px solid #c8c8c8;border-top:none"></div>
  <div class="a" style="left:427.5px;top:279.2px;width:247px;height:13.8px;background:#d5d5d5"></div>
  <div class="a" style="left:427.5px;top:427.5px;width:247px;height:1px;background:#cfcfcf"></div>
  <div class="a" style="left:432.7px;top:266.8px;width:7.5px;height:7.5px;border-radius:50%;background:radial-gradient(circle at 50% 40%,#8fd39b,#3e9a55 75%,#2f7d44)"></div>
  <div class="a" style="left:432.7px;top:282.3px;width:7.5px;height:7.5px;border-radius:50%;background:radial-gradient(circle at 50% 40%,#8fd39b,#3e9a55 75%,#2f7d44)"></div>
  <div class="a" style="left:432.7px;top:297.7px;width:7.5px;height:7.5px;border-radius:50%;background:radial-gradient(circle at 50% 40%,#8fd39b,#3e9a55 75%,#2f7d44)"></div>
  <div class="a" style="left:432.7px;top:313.4px;width:7.5px;height:7.5px;border-radius:50%;background:radial-gradient(circle at 50% 40%,#8fd39b,#3e9a55 75%,#2f7d44)"></div>
  <div class="a" style="left:432.7px;top:329px;width:7.5px;height:7.5px;border-radius:50%;background:radial-gradient(circle at 50% 40%,#8fd39b,#3e9a55 75%,#2f7d44)"></div>
  <div class="a" style="left:446px;top:263px;width:228px;height:80px;overflow:hidden">
    <div class="t" style="left:0;top:0;font-size:10.75px;line-height:15.6px;color:#111;-webkit-text-stroke:0.2px #111">clearCache() – Cms\Classes\Router
findByFile($fileName, $parameters) – Cms\Classes\Router
findByUrl($url) – Cms\Classes\Router
getParameter($name, $default) – Cms\Classes\Router
getParameters() – Cms\Classes\Router</div>
  </div>
  <div class="t" style="left:427px;top:429.5px;width:247px;text-align:right;font-size:9px;color:#333">Press '^Space' to show Template Proposals</div>
  <!-- mouse cursor -->
  <svg style="left:508px;top:326px" width="12" height="17"><path d="M1 1 V13 L4 10 L6.5 15 L8.5 14 L6 9 H10 Z" fill="#111" stroke="#fff" stroke-width="0.9"/></svg>

  <!-- yellow info popup -->
  <div class="a" style="left:674.5px;top:262.6px;width:170px;height:176px;background:#fafac8;border-left:1px solid #bdbd9a;box-shadow:0 3px 7px rgba(0,0,0,.3)"></div>
  <div class="a" style="left:674.5px;top:426px;width:170px;height:1px;background:#d9d9b0"></div>
  <div class="a" style="left:680.7px;top:269px;width:7.5px;height:7.5px;border-radius:50%;background:radial-gradient(circle at 50% 40%,#8fd39b,#3e9a55 75%,#2f7d44)"></div>
  <div class="t" style="left:696.5px;top:266px;font-size:11px;line-height:12px;font-weight:bold;color:#1a1a1a">Cms\Classes\Router::findByFile(
$fileName, array $parameters)</div>
  <div class="t" style="left:678px;top:299px;font-size:10.65px;line-height:12px;color:#1a1a1a;-webkit-text-stroke:0.15px #1a1a1a">Finds a URL by it's page.</div>
  <div class="t" style="left:678px;top:321px;font-size:10.65px;line-height:12px;color:#1a1a1a;-webkit-text-stroke:0.15px #1a1a1a">Returns the URL route for linking
the supplied</div>
  <div class="t" style="left:678px;top:355.5px;font-size:10.65px;line-height:12px;color:#1a1a1a;-webkit-text-stroke:0.15px #1a1a1a">parameters in it's address.</div>
  <div class="t" style="left:678px;top:377px;font-size:10.65px;line-height:12px;font-weight:bold;color:#1a1a1a">Parameters:</div>
  <div class="t" style="left:715px;top:401px;font-size:10.65px;line-height:12px;color:#1a1a1a;-webkit-text-stroke:0.15px #1a1a1a"><b style="font-size:11.1px">string $fileName</b> Page file name</div>
  <div class="t" style="left:754px;top:429.5px;font-size:9px;color:#777">Press 'Tab' from proposal table or click for focus</div>
</div>

</div>
</body></html>
